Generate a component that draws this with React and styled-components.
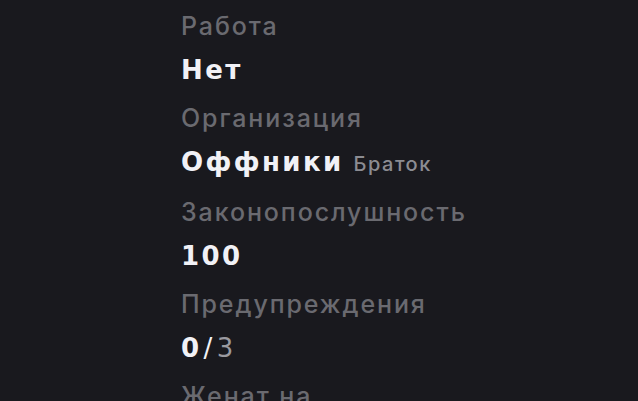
import styled, { createGlobalStyle } from "styled-components";

const GlobalStyle = createGlobalStyle`
  html, body {
    margin: 0;
    padding: 0;
    background: #19191e;
  }
  body {
    font-family: Inter, "Noto Sans", sans-serif;
    overflow: hidden;
  }
`;

const fields = [
  { label: "Работа", value: "Нет" },
  { label: "Организация", value: "Оффники", note: "Браток" },
  { label: "Законопослушность", value: "100" },
  { label: "Предупреждения", value: "0", total: "3" },
  { label: "Женат на", value: "" },
];

export default function App() {
  return (
    <>
      <GlobalStyle />
      <Page>
        <InfoList>
          {fields.map(({ label, value, note, total }) => (
            <Field key={label}>
              <Label>{label}</Label>
              {value && (
                <Value>
                  {value}
                  {total && <Total>/<span>{total}</span></Total>}
                  {note && <Note>{note}</Note>}
                </Value>
              )}
            </Field>
          ))}
        </InfoList>
      </Page>
    </>
  );
}

const Page = styled.main`
  width: 638px;
  height: 401px;
  overflow: hidden;
  padding: 11px 0 0 181px;
  box-sizing: border-box;
`;

const InfoList = styled.div`
  display: flex;
  flex-direction: column;
`;

const Field = styled.div`
  display: flex;
  flex-direction: column;
  gap: 14px;
  margin-bottom: 18px;
`;

const Label = styled.div`
  font-size: 25px;
  line-height: 30px;
  font-weight: 500;
  letter-spacing: 1.9px;
  color: #6a6a70;
`;

const Value = styled.div`
  display: flex;
  align-items: baseline;
  font-family: "DejaVu Sans", Inter, sans-serif;
  font-size: 26px;
  line-height: 30px;
  font-weight: 700;
  letter-spacing: 2.4px;
  color: #f1f1f6;
`;

const Total = styled.span`
  font-weight: 400;
  padding-left: 2px;
  span {
    margin-left: 2px;
    color: #9a9aa0;
  }
`;

const Note = styled.span`
  margin-left: 10px;
  font-family: Inter, "Noto Sans", sans-serif;
  font-size: 20px;
  font-weight: 500;
  letter-spacing: 1.5px;
  color: #8c8c92;
`;
